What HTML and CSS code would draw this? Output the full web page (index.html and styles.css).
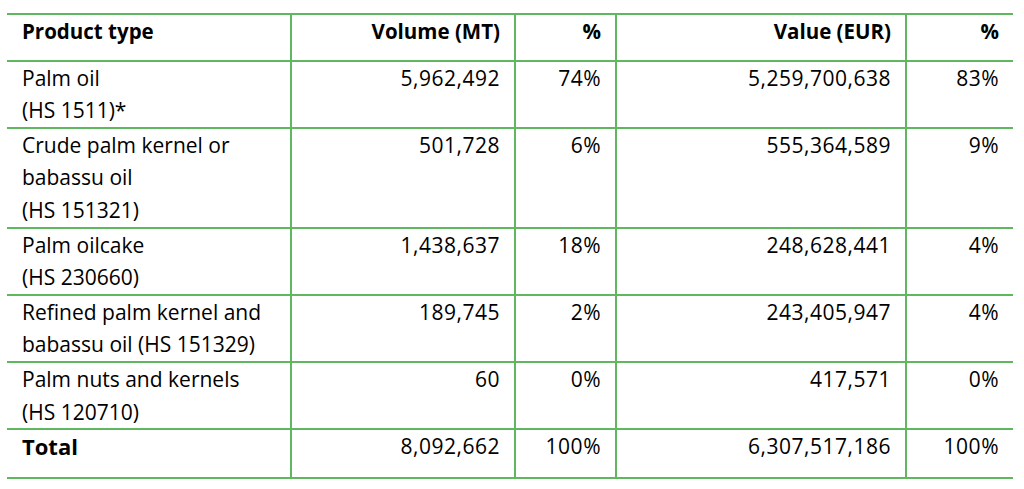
FILE: index.html
```html
<!DOCTYPE html>
<html>
<head>
<meta charset="utf-8">
<link rel="stylesheet" href="styles.css">
</head>
<body>
<table class="trade">
  <colgroup>
    <col class="c-type"><col class="c-vol"><col class="c-pct"><col class="c-val"><col class="c-pct2">
  </colgroup>
  <thead>
    <tr class="head">
      <th class="left">Product type</th>
      <th>Volume (MT)</th>
      <th>%</th>
      <th>Value (EUR)</th>
      <th>%</th>
    </tr>
  </thead>
  <tbody>
    <tr>
      <td class="left">Palm oil<br>(HS 1511)*</td>
      <td>5,962,492</td><td>74%</td><td>5,259,700,638</td><td>83%</td>
    </tr>
    <tr>
      <td class="left">Crude palm kernel or<br>babassu oil<br>(HS 151321)</td>
      <td>501,728</td><td>6%</td><td>555,364,589</td><td>9%</td>
    </tr>
    <tr>
      <td class="left">Palm oilcake<br>(HS 230660)</td>
      <td>1,438,637</td><td>18%</td><td>248,628,441</td><td>4%</td>
    </tr>
    <tr>
      <td class="left">Refined palm kernel and<br>babassu oil (HS 151329)</td>
      <td>189,745</td><td>2%</td><td>243,405,947</td><td>4%</td>
    </tr>
    <tr>
      <td class="left">Palm nuts and kernels<br>(HS 120710)</td>
      <td>60</td><td>0%</td><td>417,571</td><td>0%</td>
    </tr>
    <tr class="total">
      <td class="left">Total</td>
      <td>8,092,662</td><td>100%</td><td>6,307,517,186</td><td>100%</td>
    </tr>
  </tbody>
</table>
</body>
</html>
```
FILE: styles.css
```css
html, body {
  margin: 0;
  padding: 0;
  background: #ffffff;
}
body {
  padding: 13px 0 0 7px;
  font-family: "Open Sans", Lato, sans-serif;
  color: #000000;
}
.trade {
  border-collapse: collapse;
  width: 1006px;
  table-layout: fixed;
  font-size: 21px;
  line-height: 32.6px;
}
.c-type { width: 284px; }
.c-vol { width: 224px; }
.c-pct { width: 101px; }
.c-val { width: 290px; }
.c-pct2 { width: 107px; }
.trade th, .trade td {
  border: 2px solid #5fb85f;
  padding: 0 14px 0 15px;
  text-align: right;
  vertical-align: top;
  font-weight: normal;
  letter-spacing: 0.5px;
}
.trade tr > :first-child { border-left: none; }
.trade tr > :last-child { border-right: none; }
.trade .left { text-align: left; letter-spacing: 0; }
.head th {
  font-weight: bold;
  font-size: 20.5px;
  letter-spacing: 0;
  padding-bottom: 12px;
}
.total td { padding-bottom: 14px; }
.total .left { font-weight: bold; font-size: 22px; }
```
